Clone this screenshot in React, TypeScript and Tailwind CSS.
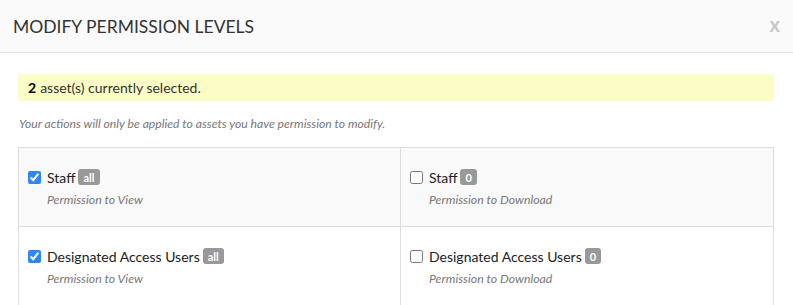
import React from 'react';

type Perm = { label: string; badge: string; sub: string; checked: boolean };

const rows: Perm[][] = [
  [
    { label: 'Staff', badge: 'all', sub: 'Permission to View', checked: true },
    { label: 'Staff', badge: '0', sub: 'Permission to Download', checked: false },
  ],
  [
    { label: 'Designated Access Users', badge: 'all', sub: 'Permission to View', checked: true },
    { label: 'Designated Access Users', badge: '0', sub: 'Permission to Download', checked: false },
  ],
];

function Cell({ p, right }: { p: Perm; right?: boolean }) {
  return (
    <div className={`pt-[19px] pb-[18px] pl-[9px] ${right ? '' : 'border-r border-[#dddddd]'}`}>
      <label className="flex items-center h-[20px]">
        <input
          type="checkbox"
          defaultChecked={p.checked}
          className="w-[13px] h-[13px] m-0 mr-[6px] accent-[#2f86f6]"
        />
        <span className="text-[14px] text-[#222]">{p.label}</span>
        <span className="ml-[3px] inline-flex items-center h-[16px] px-[5px] rounded-[3px] bg-[#999999] text-white text-[11px] font-bold leading-none">
          {p.badge}
        </span>
      </label>
      <div className="mt-[4px] pl-[19px] text-[12.3px] italic text-[#777] leading-[17px]">{p.sub}</div>
    </div>
  );
}

export default function App() {
  return (
    <div className="w-[793px] h-[305px] overflow-hidden bg-white font-['Lato','Liberation_Sans',sans-serif] text-[#333]">
      <div className="h-[53px] bg-[#fafafa] border-b border-[#e5e5e5] flex items-center justify-between pl-[13px] pr-[13px]">
        <h1 className="text-[17.5px] text-[#333] mt-[2px]">MODIFY PERMISSION LEVELS</h1>
        <button className="text-[20px] font-bold text-[#c8c8c8] leading-none -mt-[4px]">x</button>
      </div>
      <div className="px-[18px] pt-[21px] mr-[1px]">
        <div className="h-[27px] bg-[#fcfcc6] flex items-center px-[10px] text-[14px] text-[#333]">
          <b className="text-black mr-[4px]">2</b>asset(s) currently selected.
        </div>
        <p className="mt-[14px] text-[12.2px] italic text-[#777] leading-[17px] pl-[1px]">
          Your actions will only be applied to assets you have permission to modify.
        </p>
        <div className="mt-[15px] border-t border-l border-r border-[#dddddd]">
          {rows.map((r, i) => (
            <div
              key={i}
              className={`grid grid-cols-[382px_1fr] ${i === 0 ? 'bg-[#f9f9f9] border-b border-[#dddddd]' : 'bg-white'}`}
            >
              <Cell p={r[0]} />
              <Cell p={r[1]} right />
            </div>
          ))}
        </div>
      </div>
    </div>
  );
}
